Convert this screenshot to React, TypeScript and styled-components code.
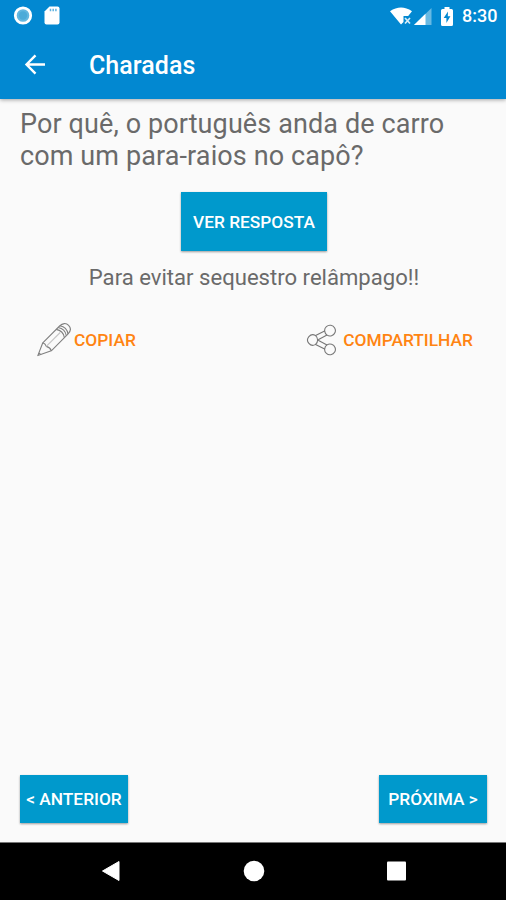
import React from 'react';
import styled, { createGlobalStyle } from 'styled-components';

const GlobalStyle = createGlobalStyle`
  *, *::before, *::after { box-sizing: border-box; }
  html, body { margin: 0; background: #fafafa; }
  body { font-family: Roboto, "Liberation Sans", sans-serif; }
  button { font-family: inherit; border: 0; padding: 0; margin: 0; background: none; cursor: pointer; }
  svg { display: block; flex: none; }
`;

const Screen = styled.div`
  width: 100%;
  height: 900px;
  display: flex;
  flex-direction: column;
  background: #fafafa;
  overflow: hidden;
`;

const Header = styled.header`
  flex: none;
  height: 99px;
  background: #0288d1;
  color: #fff;
  box-shadow: 0 1px 4px rgba(0, 0, 0, 0.35);
`;

const StatusBar = styled.div`
  height: 32px;
  padding: 0 9px 0 13px;
  display: flex;
  align-items: center;
  justify-content: space-between;
`;

const StatusGroup = styled.div<{ $gap: number }>`
  display: flex;
  align-items: center;
  gap: ${(p) => p.$gap}px;
`;

const PowerGroup = styled(StatusGroup)`
  margin-left: 8px;
`;

const Clock = styled.span`
  width: 35px;
  font-size: 18px;
  font-weight: 500;
  line-height: 32px;
  white-space: nowrap;
`;

const Toolbar = styled.div`
  height: 66px;
  padding-left: 24px;
  display: flex;
  align-items: center;
  gap: 43px;
`;

const Title = styled.h1`
  margin: 2px 0 0;
  font-size: 25px;
  font-weight: 500;
  line-height: 30px;
  letter-spacing: 0.05px;
`;

const Content = styled.main`
  flex: 1;
  padding: 9px 19px 19px 20px;
  display: flex;
  flex-direction: column;
`;

const Question = styled.p`
  margin: 0;
  color: #6a6a6a;
  font-size: 27px;
  line-height: 32px;
  letter-spacing: 0.11px;
  white-space: nowrap;
`;

const Answer = styled.p`
  margin: 10px 0 0 1px;
  color: #6a6a6a;
  font-size: 22.1px;
  line-height: 32px;
  text-align: center;
`;

const FlatButton = styled.button<{ $width: number; $height: number }>`
  width: ${(p) => p.$width}px;
  height: ${(p) => p.$height}px;
  background: #0099cc;
  color: #fff;
  font-size: 17.3px;
  font-weight: 500;
  white-space: nowrap;
  box-shadow: 0 1px 2px rgba(0, 0, 0, 0.38);
`;

const Reveal = styled.div`
  display: flex;
  justify-content: center;
  margin: 20px 0 0 1px;
`;

const Actions = styled.div`
  display: flex;
  justify-content: space-between;
  margin-top: 29px;
  padding: 0 14px 0 17px;
`;

const Action = styled.button<{ $gap: number }>`
  display: flex;
  align-items: center;
  gap: ${(p) => p.$gap}px;
  height: 36px;
  color: #ff8412;
  font-size: 17.35px;
  font-weight: 500;
  white-space: nowrap;
`;

const Pager = styled.div`
  margin-top: auto;
  display: flex;
  justify-content: space-between;
`;

const NavBar = styled.nav`
  flex: none;
  height: 58px;
  background: #000;
  border-top: 1px solid #777;
  padding: 0 99px 1px 101px;
  display: flex;
  align-items: center;
  justify-content: space-between;
`;

const NavButton = styled.button`
  height: 24px;
`;

const RecordIcon = () => (
  <svg width="20" height="20" viewBox="0 0 20 20">
    <circle cx="10" cy="9.5" r="7.7" fill="#64b7df" stroke="#fff" strokeWidth="2.8" />
    <circle cx="10" cy="9.5" r="4.2" fill="#4dabd8" />
  </svg>
);

const CardIcon = () => (
  <svg width="16" height="20" viewBox="0 0 16 20">
    <path d="M5.5 .5H13.5Q15.5 .5 15.5 2.5V16.5Q15.5 18.5 13.5 18.5H2.5Q.5 18.5 .5 16.5V5.5Z" fill="#fff" />
    <path d="M6.5 2.8V5.2M9.2 2.8V5.2M11.9 2.8V5.2" stroke="#5fb3e0" strokeWidth="1.5" />
  </svg>
);

const WifiIcon = () => (
  <svg width="23" height="18" viewBox="0 0 23 18">
    <path d="M0 4.3Q11 -3.2 22 4.3L18.2 9H13.5V15L11 17.5Z" fill="#fff" />
    <path d="M15 11L20 16.5M20 11L15 16.5" stroke="#d6edf8" strokeWidth="1.7" />
  </svg>
);

const SignalIcon = () => (
  <svg width="18" height="17" viewBox="0 0 18 17">
    <path d="M17.5 0V17H0Z" fill="#67b9e3" />
    <path d="M11.5 5.8V17H0Z" fill="#fff" />
  </svg>
);

const BatteryIcon = () => (
  <svg width="12" height="19" viewBox="0 0 12 19">
    <path d="M3.5 0H8.5V2H10.5Q12 2 12 3.5V17.5Q12 19 10.5 19H1.5Q0 19 0 17.5V3.5Q0 2 1.5 2H3.5Z" fill="#fff" />
    <path d="M7 4.5L2.7 11H5.4V16L9.4 9.3H6.8Z" fill="#0288d1" />
  </svg>
);

const BackArrow = () => (
  <svg width="22" height="22" viewBox="0 0 22 22" fill="none" stroke="#fff" strokeWidth="2.4">
    <path d="M21 10.5H3M11.5 1.3L2.5 10.5L11.5 19.7" />
  </svg>
);

const PencilIcon = () => (
  <svg width="34" height="34" viewBox="0 0 34 34" fill="none" stroke="#808080" strokeWidth="1.1" strokeLinejoin="round">
    <path d="M.8 32.6L5.8 19.8L22.6 3C25.6 0 29.2-.2 31.6 2.3C34 4.8 33.8 8.2 30.9 11.1L14.3 27.8Z" />
    <path d="M5.8 19.8C7.8 20.4 8.6 21 9.3 23.4C11.8 24.1 13.4 25 14.3 27.8M1.9 30L3.9 31.7" />
    <path d="M9.3 23.4L23.2 9.5" stroke="#c4c4c4" />
    <path d="M19.2 6.4C24.1 7.2 26.5 9.6 27.4 14.6M21.1 4.5C26 5.3 28.5 7.8 29.3 12.7M22.9 2.8C27.8 3.6 30.2 6.1 31 11" />
  </svg>
);

const ShareIcon = () => (
  <svg width="32" height="32" viewBox="0 0 32 32" fill="none" stroke="#777" strokeWidth="1.1" strokeLinejoin="round">
    <path d="M9.6 11.6L18.6 6.9A5.4 5.4 0 1 1 21 11.1L12.6 15.6V16.4L21 20.9A5.4 5.4 0 1 1 18.6 25.1L9.6 20.4A5.2 5.2 0 1 1 9.6 11.6Z" />
    <path d="M9.6 11.6Q11.6 13.2 11.6 16Q11.6 18.8 9.6 20.4M18.6 6.9Q19 9.8 21 11.1M21 20.9Q19 22.2 18.6 25.1" />
  </svg>
);

const NavBack = () => (
  <svg width="20" height="24" viewBox="0 0 20 24">
    <path d="M1.5 12L18 2.5V21.5Z" fill="#fff" stroke="#fff" strokeWidth="1" strokeLinejoin="round" />
  </svg>
);

const NavHome = () => (
  <svg width="22" height="24" viewBox="0 0 22 24">
    <circle cx="11" cy="12" r="10.3" fill="#fff" />
  </svg>
);

const NavRecent = () => (
  <svg width="21" height="24" viewBox="0 0 21 24">
    <rect x="1" y="2.5" width="19" height="19" rx="1" fill="#fff" />
  </svg>
);

export default function App() {
  return (
    <>
      <GlobalStyle />
      <Screen>
        <Header>
          <StatusBar>
            <StatusGroup $gap={11}>
              <RecordIcon />
              <CardIcon />
            </StatusGroup>
            <StatusGroup $gap={1}>
              <WifiIcon />
              <SignalIcon />
              <PowerGroup $gap={9}>
                <BatteryIcon />
                <Clock>8:30</Clock>
              </PowerGroup>
            </StatusGroup>
          </StatusBar>
          <Toolbar>
            <BackArrow />
            <Title>Charadas</Title>
          </Toolbar>
        </Header>
        <Content>
          <Question>
            Por quê, o português anda de carro
            <br />
            com um para-raios no capô?
          </Question>
          <Reveal>
            <FlatButton $width={146} $height={59}>VER RESPOSTA</FlatButton>
          </Reveal>
          <Answer>Para evitar sequestro relâmpago!!</Answer>
          <Actions>
            <Action $gap={3}>
              <PencilIcon />
              COPIAR
            </Action>
            <Action $gap={5}>
              <ShareIcon />
              COMPARTILHAR
            </Action>
          </Actions>
          <Pager>
            <FlatButton $width={108} $height={48}>&lt; ANTERIOR</FlatButton>
            <FlatButton $width={108} $height={48}>PRÓXIMA &gt;</FlatButton>
          </Pager>
        </Content>
        <NavBar>
          <NavButton aria-label="Voltar"><NavBack /></NavButton>
          <NavButton aria-label="Início"><NavHome /></NavButton>
          <NavButton aria-label="Recentes"><NavRecent /></NavButton>
        </NavBar>
      </Screen>
    </>
  );
}
